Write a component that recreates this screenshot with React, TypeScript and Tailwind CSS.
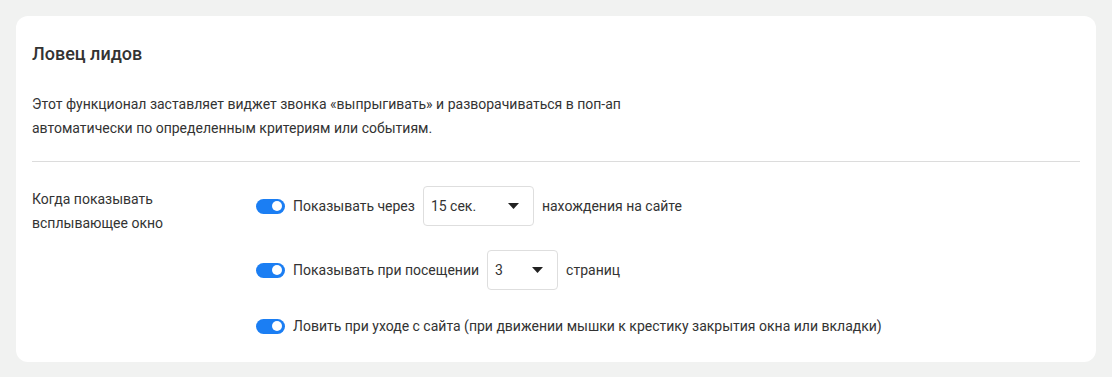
import { useState } from "react";

function Toggle({ on, onChange }: { on: boolean; onChange: () => void }) {
  return (
    <button
      type="button"
      onClick={onChange}
      className={`flex h-[15px] w-[29px] shrink-0 items-center rounded-full px-[3px] ${
        on ? "justify-end bg-[#1b7ef3]" : "justify-start bg-[#c9cdd2]"
      }`}
    >
      <span className="block h-[10px] w-[10px] rounded-full bg-white" />
    </button>
  );
}

function Select({ value, width }: { value: string; width: string }) {
  return (
    <div
      className={`flex h-10 items-center justify-between rounded-[4px] border border-[#dedede] bg-white pl-[7px] pr-[14px] ${width}`}
    >
      <span>{value}</span>
      <svg width="11" height="6" viewBox="0 0 11 6" className="shrink-0">
        <path d="M0 0h11L5.5 6z" fill="#222" />
      </svg>
    </div>
  );
}

export default function App() {
  const [timer, setTimer] = useState(true);
  const [pages, setPages] = useState(true);
  const [exit, setExit] = useState(true);

  return (
    <div className="min-h-[377px] bg-[#f1f2f1] p-4 font-['Roboto',sans-serif] text-[14px] text-[#333]">
      <div className="rounded-xl bg-white px-4 pb-6 pt-[26px]">
        <h2 className="text-[18px] leading-6 font-medium text-[#333]">Ловец лидов</h2>
        <p className="mt-[26px] leading-6 text-[#333]">
          Этот функционал заставляет виджет звонка «выпрыгивать» и разворачиваться в поп-ап
          <br />
          автоматически по определенным критериям или событиям.
        </p>
        <div className="mt-[21px] h-px bg-[#dcdcdc]" />

        <div className="mt-6 flex">
          <div className="w-[224px] shrink-0 pt-px leading-6">
            Когда показывать
            <br />
            всплывающее окно
          </div>
          <div className="flex flex-col gap-6">
            <div className="flex h-10 items-center gap-2">
              <Toggle on={timer} onChange={() => setTimer(!timer)} />
              <span>Показывать через</span>
              <Select value="15 сек." width="w-[111px]" />
              <span>нахождения на сайте</span>
            </div>
            <div className="flex h-10 items-center gap-2">
              <Toggle on={pages} onChange={() => setPages(!pages)} />
              <span>Показывать при посещении</span>
              <Select value="3" width="w-[71px]" />
              <span>страниц</span>
            </div>
            <div className="flex h-6 items-center gap-2">
              <Toggle on={exit} onChange={() => setExit(!exit)} />
              <span>Ловить при уходе с сайта (при движении мышки к крестику закрытия окна или вкладки)</span>
            </div>
          </div>
        </div>
      </div>
    </div>
  );
}
